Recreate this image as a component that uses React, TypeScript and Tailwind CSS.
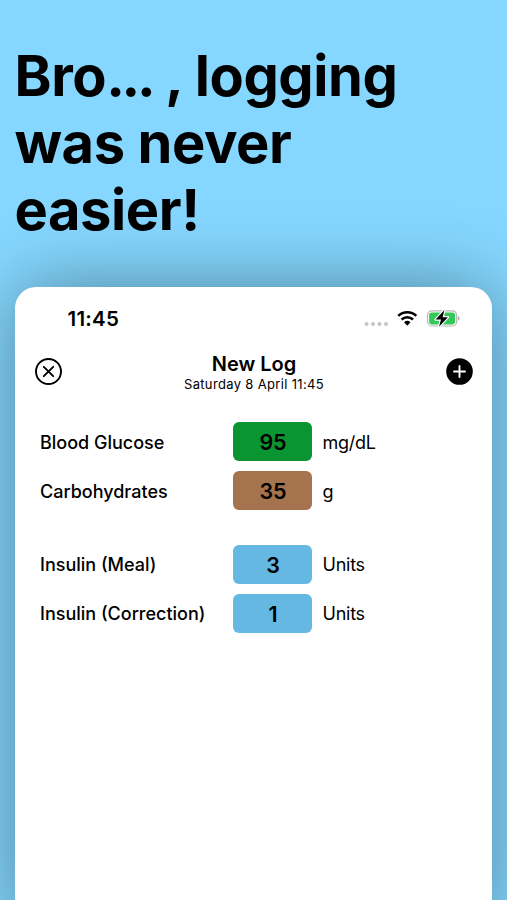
import React from "react";

type Entry = { label: string; value: string; unit: string; color: string };

function LogRow({ label, value, unit, color }: Entry) {
  return (
    <div className="flex h-[39px] items-center text-[18px]">
      <div className="w-[193px] whitespace-nowrap pt-px font-medium">{label}</div>
      <div className={`flex h-[39px] w-[79px] items-center justify-center rounded-[6px] pl-px pt-px text-[21.5px] font-semibold tracking-[-0.2px] ${color}`}>
        {value}
      </div>
      <div className="ml-[10.5px] pt-px tracking-[-0.25px]">{unit}</div>
    </div>
  );
}

function StatusIcons() {
  return (
    <svg className="ml-auto mr-[31px] mt-px" width="98" height="22" viewBox="0 0 98 22">
      <g fill="#c5c5c7">
        <circle cx="3.6" cy="15" r="2" />
        <circle cx="10" cy="15" r="2" />
        <circle cx="16.5" cy="15" r="2" />
        <circle cx="23" cy="15" r="2" />
      </g>
      <g fill="none" stroke="black" strokeWidth="2.6">
        <path d="M35.3 6.9a12.8 12.8 0 0 1 18 0" />
        <path d="M38.6 10.5a8.2 8.2 0 0 1 11.4 0" />
      </g>
      <path d="M41.1 13.3a4.8 4.8 0 0 1 6.4 0l-3.2 3.4z" />
      <rect x="64.5" y="1.8" width="29.2" height="15.2" rx="4.5" fill="white" stroke="#b5b5b7" strokeWidth="1.2" />
      <rect x="66.1" y="3.4" width="26" height="12" rx="2.8" fill="#34c759" />
      <path d="M95 7.1c2.2.9 2.2 3.7 0 4.6z" fill="#b5b5b7" />
      <path
        d="M81.4 1l-8.8 9.5h5.4l-2 7.2 8.9-9.5h-5.3z"
        fill="black"
        stroke="white"
        strokeWidth="2.4"
        strokeLinejoin="round"
        paintOrder="stroke"
      />
    </svg>
  );
}

export default function App() {
  return (
    <main className="flex h-[900px] w-[507px] flex-col overflow-hidden bg-[#85d7ff] font-['Inter',sans-serif] text-black">
      <h1 className="ml-[14.5px] mt-[43px] whitespace-nowrap text-[56px] font-bold leading-[67px] tracking-[-0.4px]">
        Bro<span className="tracking-[-3.3px]">...</span> , logging<br />was never<br />easier!
      </h1>
      <section className="ml-[15px] mt-[43px] flex h-[640px] w-[477px] shrink-0 flex-col rounded-t-[21px] bg-white shadow-[0_0_75px_rgba(0,0,0,0.39)]">
        <div className="flex h-[64px] items-center pl-[52.5px]">
          <span className="text-[20.5px] font-semibold tracking-[0.25px]">11:45</span>
          <StatusIcons />
        </div>
        <header className="flex h-[41px] items-center justify-between pl-[20px] pr-[19px]">
          <svg width="27" height="27" viewBox="0 0 27 27" fill="none" stroke="black" strokeWidth="1.9">
            <circle cx="13.5" cy="13.5" r="12.5" />
            <path d="M8.8 8.8l9.4 9.4M18.2 8.8l-9.4 9.4" strokeLinecap="round" />
          </svg>
          <div className="text-center">
            <div className="text-[20px] font-semibold leading-6">New Log</div>
            <div className="text-[13px] leading-4 tracking-[0.34px]">Saturday 8 April 11:45</div>
          </div>
          <svg width="27" height="27" viewBox="0 0 27 27">
            <circle cx="13.5" cy="13.5" r="13.3" />
            <path d="M8 13.5h11M13.5 8v11" stroke="white" strokeWidth="1.9" strokeLinecap="round" />
          </svg>
        </header>
        <div className="mt-[30.4px] flex flex-col gap-[10px] pl-[25px]">
          <LogRow label="Blood Glucose" value="95" unit="mg/dL" color="bg-[#0b9532]" />
          <LogRow label="Carbohydrates" value="35" unit="g" color="bg-[#a5734e]" />
          <div className="h-[14.5px]" />
          <LogRow label="Insulin (Meal)" value="3" unit="Units" color="bg-[#64b8e2]" />
          <LogRow label="Insulin (Correction)" value="1" unit="Units" color="bg-[#64b8e2]" />
        </div>
      </section>
    </main>
  );
}
